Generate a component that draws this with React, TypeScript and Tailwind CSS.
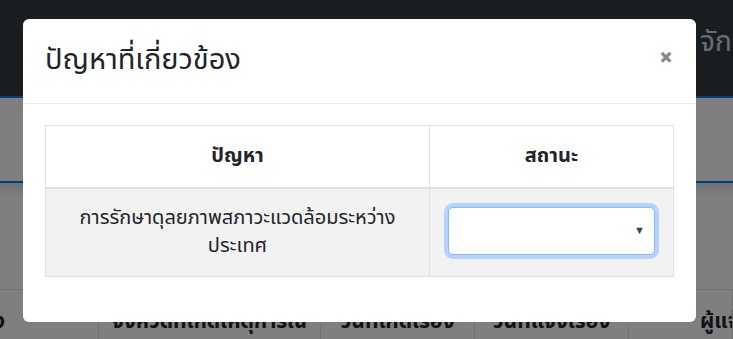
const bgColumns = [
  { label: 'ชื่อเรื่อง', w: 'w-[99px]', align: 'flex justify-end pr-[93px]' },
  { label: 'จังหวัดที่เกิดเหตุการณ์', w: 'w-[222px]', align: 'text-center' },
  { label: 'วันที่เกิดเรื่อง', w: 'w-[154px]', align: 'text-center' },
  { label: 'วันที่แจ้งเรื่อง', w: 'w-[154px]', align: 'text-center' },
  { label: 'ผู้แจ้ง', w: 'flex-1', align: 'text-left pl-[71px]' },
]

const App = () => {
  return (
    <div
      className="relative h-[339px] w-[733px] overflow-hidden bg-white"
      style={{ fontFamily: '"Noto Sans Thai", "Noto Sans", "Liberation Sans", sans-serif' }}
    >
      {/* page behind the dialog */}
      <div className="flex h-[96px] items-start bg-[#343a40] pl-[700px] pt-[22px]">
        <span className="whitespace-nowrap text-[28px] text-white/80">จักรวาล</span>
      </div>
      <div className="h-[2px] bg-[#007bff]" />
      <div className="h-[83px] bg-white" />
      <div className="h-[2px] bg-[#007bff]" />
      <div className="h-[106px] bg-gradient-to-b from-[#e0e0e0] to-white to-[12%]" />
      <div className="flex h-[60px] border-t border-[#dee2e6]">
        {bgColumns.map((col) => (
          <div
            key={col.label}
            className={`${col.w} ${col.align} shrink-0 overflow-hidden whitespace-nowrap border-r border-[#dee2e6] pt-[16px] text-[21px] font-bold text-[#212529]`}
          >
            <span className="shrink-0">{col.label}</span>
          </div>
        ))}
      </div>

      {/* backdrop */}
      <div className="absolute inset-0 bg-black/50" />

      {/* dialog */}
      <div className="absolute left-[23px] top-[19px] w-[673px] rounded-md bg-white text-[#212529]">
        <div className="flex h-[85px] items-center justify-between border-b border-[#e9ecef] px-[22px]">
          <h5 className="pb-[2px] text-[29px] leading-none">ปัญหาที่เกี่ยวข้อง</h5>
          <span className="mr-[1px] mt-[-4px] text-[24px] font-black leading-none text-[#8a8a8a]">×</span>
        </div>
        <div className="px-[22px] pt-[21px] pb-[45px]">
          <table className="w-full border-collapse border border-[#dee2e6]">
            <thead>
              <tr className="h-[62px] border-b-2 border-[#dee2e6] text-[20px]">
                <th className="w-[384px] border-r border-[#dee2e6] font-bold">ปัญหา</th>
                <th className="font-bold">สถานะ</th>
              </tr>
            </thead>
            <tbody>
              <tr className="h-[89px] bg-[#f2f2f2]">
                <td className="border-r border-[#dee2e6] px-[10px] text-center text-[20px] leading-[28px]">
                  การรักษาดุลยภาพสภาวะแวดล้อมระหว่าง
                  <br />
                  ประเทศ
                </td>
                <td className="px-[18px] pb-[3px]">
                  <div className="relative flex h-[48px] items-center rounded-[5px] border border-[#80bdff] bg-white ring-[4px] ring-[#b3d4fc]">
                    <span className="absolute right-[9px] top-[17px] text-[11px] leading-none text-[#444]">▼</span>
                  </div>
                </td>
              </tr>
            </tbody>
          </table>
        </div>
      </div>
    </div>
  )
}

export default App
